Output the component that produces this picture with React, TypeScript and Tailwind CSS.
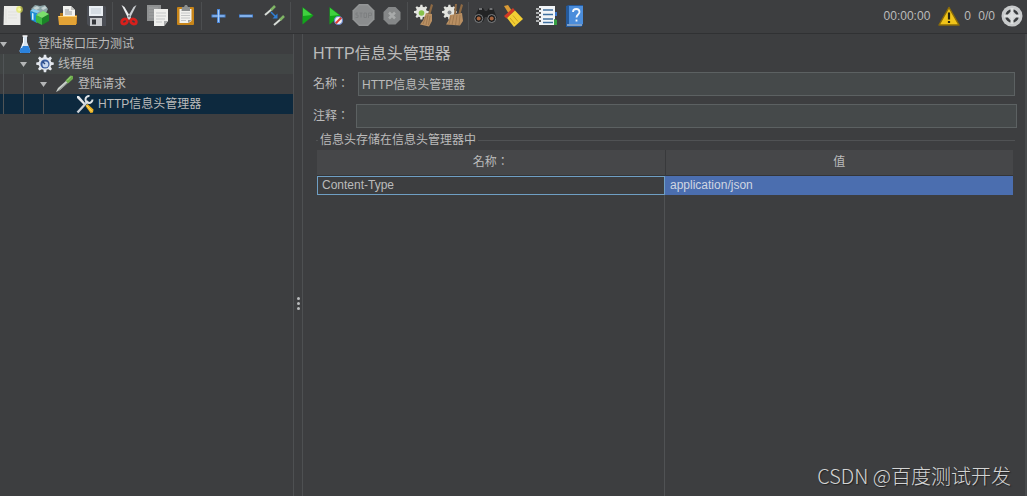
import { ReactNode, useState } from "react";

interface ToolItem {
    label: string;
    icon: ReactNode;
}

interface TreeNode {
    name: string;
    icon: ReactNode;
    leaf?: boolean;
}

const GEAR = "M10.6 1h2.8l.5 3 2 .8 2.5-1.7 2 2-1.7 2.5.8 2 3 .5v2.8l-3 .5-.8 2 1.7 2.5-2 2-2.5-1.7-2 .8-.5 3h-2.8l-.5-3-2-.8-2.5 1.7-2-2 1.7-2.5-.8-2-3-.5v-2.8l3-.5.8-2-1.7-2.5 2-2 2.5 1.7 2-.8z";

function Icon({ children }: { children: ReactNode }) {
    return (
        <svg viewBox="0 0 24 24" className="size-6 shrink-0" aria-hidden="true">
            {children}
        </svg>
    );
}

const toolGroups: ToolItem[][] = [
    [
        {
            label: "新建",
            icon: (
                <Icon>
                    <path d="M4 2h16.5v19H3.5z" fill="#ecece9" />
                    <path d="M6 5v14M8 8h9M8 11h9M8 14h9" stroke="#dededa" strokeWidth=".7" />
                    <circle cx="19.5" cy="5.5" r="3.4" fill="#e3e84e" opacity=".65" />
                    <circle cx="19.5" cy="5.5" r="1.6" fill="#f7f9a0" />
                </Icon>
            ),
        },
        {
            label: "模板",
            icon: (
                <Icon>
                    <path d="M3 5l4-4 5 1 5-1 3 4-3 6-10-1z" fill="#8ba3a6" />
                    <path d="M5 4l4-2 3 2-4 2zM13 4l4-2 2 2-4 2z" fill="#c4d2d2" />
                    <path d="M2 7l7 2v10l-6-3z" fill="#1f8fd6" />
                    <path d="M2 7l3-2 7 2-3 2z" fill="#83cdf2" />
                    <path d="M4 9l1.500 .4v6.5l-1.500-.5z" fill="#d5f0ff" />
                    <path d="M8 11l6 3v7l-6-3z" fill="#3cb640" />
                    <path d="M14 14l7-4v7l-7 4z" fill="#1a8427" />
                    <path d="M8 11l7-4 6 3-7 4z" fill="#7be06c" />
                </Icon>
            ),
        },
        {
            label: "打开",
            icon: (
                <Icon>
                    <path d="M4 9h6l1 2h10v9H4z" fill="#b47719" />
                    <path d="M7 2h8l4 4v9H7z" fill="#f2f2ef" />
                    <path d="M15 2v4h4z" fill="#bfc0bd" />
                    <path d="M9 6h4M9 8h7M9 10h7" stroke="#9a9d9e" />
                    <path d="M2 12h19l-1 9H3z" fill="#e3a336" />
                    <path d="M2.500 12.500h18" stroke="#ffd070" />
                </Icon>
            ),
        },
        {
            label: "保存",
            icon: (
                <Icon>
                    <path d="M3 2h18l1 1v19H5l-2-2z" fill="#4b4e55" />
                    <path d="M5 2h14v10H5z" fill="#e9eef3" />
                    <path d="M7 5h10M7 7h10M7 9h10" stroke="#c3ccd5" />
                    <path d="M6 14h12v8H6z" fill="#c9cbce" />
                    <path d="M8 15.500h4v5H8z" fill="#35373b" />
                </Icon>
            ),
        },
    ],
    [
        {
            label: "剪切",
            icon: (
                <Icon>
                    <path d="M4.500 1l3 2 6.500 11-2 2z" fill="#eceeef" />
                    <path d="M19.500 1l-3 2L10 14l2 2z" fill="#c9cdd0" />
                    <circle cx="12" cy="12" r="1" fill="#6e7275" />
                    <ellipse cx="7.500" cy="17.500" rx="3" ry="2.300" fill="none" stroke="#d8201c" strokeWidth="2.800" transform="rotate(-30 7.500 17.500)" />
                    <ellipse cx="16.500" cy="17.500" rx="3" ry="2.300" fill="none" stroke="#d8201c" strokeWidth="2.800" transform="rotate(30 16.500 17.500)" />
                </Icon>
            ),
        },
        {
            label: "复制",
            icon: (
                <Icon>
                    <path d="M2 1h14v16H2z" fill="#8f9192" />
                    <path d="M4 4h9M4 7h9M4 10h9M4 13h5" stroke="#9fa1a2" />
                    <path d="M9 5h14v12l-4 5H9z" fill="#eeeeec" />
                    <path d="M11 9h10M11 12h10M11 15h9M11 18h6" stroke="#c5c7c8" />
                    <path d="M19 22v-5h4z" fill="#a7a9aa" />
                </Icon>
            ),
        },
        {
            label: "粘贴",
            icon: (
                <Icon>
                    <rect x="4" y="3" width="17" height="18" rx="1" fill="#c88519" />
                    <path d="M6.500 5h12v12l-3 2h-9z" fill="#f1f1ee" />
                    <path d="M8 9h9M8 11.500h9M8 14h9M8 16.500h5" stroke="#c4c6c6" />
                    <path d="M9 3h2l1-2h2l1 2h2v4H8.500z" fill="#8d9090" />
                    <path d="M15 19v-3h3.500z" fill="#9b9d9d" />
                </Icon>
            ),
        },
    ],
    [
        {
            label: "展开",
            icon: (
                <Icon>
                    <path d="M12.500 5v14M5.500 12h14" stroke="#4a86d8" strokeWidth="3" />
                    <path d="M12.500 6v12M6.500 12h12" stroke="#a9cdf5" strokeWidth="1.200" />
                </Icon>
            ),
        },
        {
            label: "收起",
            icon: (
                <Icon>
                    <path d="M5 12h14" stroke="#4a86d8" strokeWidth="3" />
                    <path d="M6 12h12" stroke="#a9cdf5" strokeWidth="1.200" />
                </Icon>
            ),
        },
        {
            label: "切换",
            icon: (
                <Icon>
                    <path d="M3 11l7-6" stroke="#d8ddd8" strokeWidth="2" />
                    <path d="M9 6l4-4" stroke="#7fb565" strokeWidth="2.500" />
                    <path d="M12 21l7-6" stroke="#d8ddd8" strokeWidth="2" />
                    <path d="M18 16l4-4" stroke="#7fb565" strokeWidth="2.500" />
                    <path d="M9 8l5 5" stroke="#2f7fd6" strokeWidth="1.500" />
                    <path d="M15.500 9.500v5h-5z" fill="#2f7fd6" />
                </Icon>
            ),
        },
    ],
    [
        {
            label: "启动",
            icon: (
                <Icon>
                    <path d="M7.500 3l11 8.500-11 9z" fill="#12a51b" />
                    <path d="M8 4l9 7-9 1z" fill="#3fd13f" />
                </Icon>
            ),
        },
        {
            label: "不停顿启动",
            icon: (
                <Icon>
                    <path d="M6.500 3l11 8.500-11 9z" fill="#12a51b" />
                    <path d="M7 4l9 7-9 1z" fill="#3fd13f" />
                    <circle cx="15.500" cy="16.500" r="4" fill="#f1f1f5" stroke="#6684c9" strokeWidth="1.200" />
                    <path d="M12.800 19.200l5.400-5.400" stroke="#dc3d35" strokeWidth="2" />
                </Icon>
            ),
        },
        {
            label: "停止",
            icon: (
                <Icon>
                    <path d="M8 0h9l6.500 6.500v9L17 22H8l-6.500-6.500v-9z" fill="#939596" />
                    <path d="M8.500 1.500h8L22 7v8l-5.500 5.500h-8L3 15V7z" fill="#8b8d8e" />
                    <path d="M7 9H5v2h2v2.500H4.500M8.500 9h3M10 9v4.500M13 9h2.500v4.500H13zM17.500 14V9h3v2.500h-3" fill="none" stroke="#7d7f80" />
                </Icon>
            ),
        },
        {
            label: "关闭",
            icon: (
                <Icon>
                    <path d="M9.500 3h7l5 5v7.500l-5 5h-7l-5-5V8z" fill="#858788" />
                    <path d="M10 8.500l6 6M16 8.500l-6 6" stroke="#a8aaaa" strokeWidth="2.500" />
                </Icon>
            ),
        },
    ],
    [
        {
            label: "清除",
            icon: (
                <Icon>
                    <path d={GEAR} fill="#e4e5e0" transform="translate(1 0) scale(.7)" />
                    <circle cx="9.500" cy="9" r="2.800" fill="#86c14c" />
                    <path d="M19 0l2 1-2.500 9-2-1z" fill="#8f6a43" />
                    <path d="M14 9l6 1v7l-3 5.500-9-2 3-4z" fill="#b98f62" />
                    <path d="M14 12l-3 8M16 11l-2 10M18 12l-1.500 9" stroke="#98734b" strokeWidth=".8" />
                </Icon>
            ),
        },
        {
            label: "清除全部",
            icon: (
                <Icon>
                    <path d={GEAR} fill="#e4e5e0" transform="translate(1 0) scale(.7)" />
                    <circle cx="9.500" cy="8.500" r="2" fill="#84878a" />
                    <path d="M15 0l2 0-1 10h-2zM21 0l2 1-2.500 9-2-1z" fill="#8f6a43" />
                    <path d="M10 11l12-2 1 8-3 4.500-14-1 3-5z" fill="#b98f62" />
                    <path d="M11 12l-2 8M14 11l-2 10M17 11l-1.500 10M20 11l-1 10" stroke="#98734b" strokeWidth=".8" />
                </Icon>
            ),
        },
    ],
    [
        {
            label: "查找",
            icon: (
                <Icon>
                    <path d="M6 4h4l2 3h2l2-3h4l4 10-3 4h-5l-2-5h-2l-2 5H4l-3-4z" fill="#222324" />
                    <path d="M6 5h3M16.500 5h3" stroke="#8b8d8e" strokeWidth="1.500" />
                    <circle cx="5.700" cy="14.500" r="4" fill="#1b1b1c" stroke="#808284" />
                    <circle cx="18.700" cy="14.500" r="4" fill="#1b1b1c" stroke="#808284" />
                    <circle cx="5.700" cy="14.500" r="2" fill="#a8653e" />
                    <circle cx="18.700" cy="14.500" r="2" fill="#a8653e" />
                </Icon>
            ),
        },
        {
            label: "重置查找",
            icon: (
                <Icon>
                    <path d="M3 2l4-1 4 6-3 3z" fill="#d99a35" />
                    <path d="M3 12l9-8 2 2.500-8.500 8z" fill="#d23a25" />
                    <path d="M6 14l8-7.500 8 8.500-9 8z" fill="#f3cf33" />
                    <path d="M9 14l5 6M12 11.500l5 6" stroke="#c89c1c" strokeWidth=".9" />
                </Icon>
            ),
        },
    ],
    [
        {
            label: "函数助手",
            icon: (
                <Icon>
                    <path d="M5 2h16v19H5z" fill="#f1f4f7" />
                    <path d="M9 6h10M9 10.500h10M9 15h10M9 18.500h10" stroke="#3f6f9f" strokeWidth="1.500" />
                    <path d="M2 5h5M2 9h5M2 13h5M2 17h5" stroke="#d5d7d8" strokeWidth="1.500" />
                    <path d="M6 4v2M6 8v2M6 12v2M6 16v2" stroke="#333" strokeWidth="1.500" />
                    <path d="M21 8h2v4h-2z" fill="#3b78cf" />
                    <path d="M20 15l3 1v5h-3z" fill="#37a044" />
                </Icon>
            ),
        },
        {
            label: "帮助",
            icon: (
                <Icon>
                    <path d="M4 2l3-1h14v20l-2 2H4z" fill="#24599b" />
                    <path d="M7 2h14v18H7z" fill="#4b8ddb" />
                    <path d="M5 21h15" stroke="#dce7f2" />
                    <path d="M11 8c0-4 6.500-4 6.500 0 0 2.500-3 2.500-3 5.500M14.500 15.500v2" fill="none" stroke="#f2f7fd" strokeWidth="1.800" />
                </Icon>
            ),
        },
    ],
];

const treeNodes: TreeNode[] = [
    {
        name: "登陆接口压力测试",
        icon: (
            <svg viewBox="0 0 20 20" className="size-5" aria-hidden="true">
                <path d="M8 2h4v6l3.500 9-1 2h-9l-1-2L8 8z" fill="#d7e3ee" />
                <path d="M6.500 12h7l2 5-1 2h-9l-1-2z" fill="#2b82dc" />
                <path d="M8.500 4v5l-2 5" stroke="#fff" fill="none" />
                <path d="M7.500 2h5" stroke="#f2f2f2" strokeWidth="1.500" />
            </svg>
        ),
    },
    {
        name: "线程组",
        icon: (
            <svg viewBox="0 0 24 24" className="size-5" aria-hidden="true">
                <path d={GEAR} fill="#e3e7ee" />
                <circle cx="12" cy="12" r="5.500" fill="#3a5da0" />
                <circle cx="12.500" cy="12.500" r="3.500" fill="#c7d6ee" />
                <path d="M12 12l-3-3" stroke="#26467f" strokeWidth="1.600" />
            </svg>
        ),
    },
    {
        name: "登陆请求",
        icon: (
            <svg viewBox="0 0 20 20" className="size-5" aria-hidden="true">
                <path d="M1 18l2-4 9-8 2 2-9 8z" fill="#c9cfca" />
                <path d="M3 17l9-8" stroke="#858d89" />
                <path d="M10.500 6.500l5-5 2.500.5v3l-5 4.500z" fill="#6cab4c" />
                <path d="M12 6.500l4-4" stroke="#a6da85" />
            </svg>
        ),
    },
    {
        name: "HTTP信息头管理器",
        leaf: true,
        icon: (
            <svg viewBox="0 0 20 20" className="size-5" aria-hidden="true">
                <path d="M2 2l2 0 7 8-1.500 1.500L2 4z" fill="#e6e8ea" />
                <path d="M10.500 12l2-2 6 5.500-.5 3-2.500.5z" fill="#eeb220" />
                <path d="M11.500 11.500l5.500 6" stroke="#ffdd75" />
                <path d="M2.500 18.500L13 7" stroke="#cdd2d7" strokeWidth="2.300" />
                <path d="M17.500 5.500A3.500 3.500 0 1 1 14.500 2" fill="none" stroke="#dfe3e6" strokeWidth="2" />
            </svg>
        ),
    },
];

function Toolbar() {
    return (
        <header className="flex h-[34px] shrink-0 items-center justify-between border-b border-[#303133] pb-px">
            <div className="flex items-center gap-1">
                {toolGroups.map((group, i) => (
                    <div key={i} className="flex items-center gap-1">
                        {i > 0 && <span className={i === 6 ? "h-7 w-px" : "h-7 w-px bg-[#4c4e50]"} />}
                        {group.map((tool) => (
                            <button key={tool.label} type="button" aria-label={tool.label} className="size-6">
                                {tool.icon}
                            </button>
                        ))}
                    </div>
                ))}
            </div>
            <div className="flex items-center pr-1">
                <span>00:00:00</span>
                <button type="button" aria-label="警告" className="mx-1 pl-1">
                    <svg viewBox="0 0 22 20" className="h-5 w-[22px]" aria-hidden="true">
                        <path d="M11 1.500L21 19H1z" fill="#f0c419" stroke="#8b6c08" strokeWidth="1.500" strokeLinejoin="round" />
                        <path d="M11 6.500v7M11 15v2" stroke="#29260f" strokeWidth="2.200" />
                    </svg>
                </button>
                <span className="w-[14px]">0</span>
                <span>0/0</span>
                <svg viewBox="0 0 22 22" className="ml-[6px] size-[22px]" aria-hidden="true">
                    <circle cx="11" cy="11" r="10.500" fill="#c8cacb" />
                    <circle cx="11" cy="11" r="5.500" fill="none" stroke="#3a3c3e" strokeWidth="2.600" />
                    <path d="M11 3v16M3 11h16" stroke="#dddfdf" strokeWidth="3" />
                </svg>
            </div>
        </header>
    );
}

function TestTree() {
    const [selected, setSelected] = useState(3);

    return (
        <nav className="w-[294px] shrink-0 border-r border-[#4e5052]">
            <ul>
                {treeNodes.map((node, level) => (
                    <li key={node.name}>
                        <button
                            type="button"
                            onClick={() => setSelected(level)}
                            className={`flex h-5 w-full items-center text-left ${
                                selected === level ? "bg-[#0d293e]" : level === 1 ? "bg-[#414545]" : ""
                            }`}
                        >
                            {treeNodes.slice(0, level).map((parent) => (
                                <span key={parent.name} className="h-full w-5 pl-[3px]">
                                    <span className="block h-full w-px bg-[#505456]" />
                                </span>
                            ))}
                            <span className="w-[15px]">
                                {!node.leaf && (
                                    <svg viewBox="0 0 7 5" className="h-[5px] w-[7px]" aria-hidden="true">
                                        <path d="M0 0h7L3.500 5z" fill="#b4b6b7" />
                                    </svg>
                                )}
                            </span>
                            {node.icon}
                            <span className="pl-[3px]">{node.name}</span>
                        </button>
                    </li>
                ))}
            </ul>
        </nav>
    );
}

function HeaderManager() {
    const [name, setName] = useState("HTTP信息头管理器");
    const [comment, setComment] = useState("");

    return (
        <main className="flex min-w-0 flex-1 flex-col pt-2 pr-2 pl-[10px]">
            <h1 className="mb-[6px] text-base leading-6">HTTP信息头管理器</h1>
            <div className="mb-2 flex items-center pr-[2px]">
                <label htmlFor="name" className="w-[45px] shrink-0 font-['Liberation_Sans','Noto_Sans_CJK_TC',sans-serif]">名称：</label>
                <input
                    id="name"
                    value={name}
                    onChange={(e) => setName(e.target.value)}
                    className="h-6 min-w-0 flex-1 border border-[#5c6162] bg-[#45494a] px-[3px] pb-[2px] outline-none"
                />
            </div>
            <div className="mb-1 flex items-center">
                <label htmlFor="comment" className="w-[43px] shrink-0 font-['Liberation_Sans','Noto_Sans_CJK_TC',sans-serif]">注释：</label>
                <input
                    id="comment"
                    value={comment}
                    onChange={(e) => setComment(e.target.value)}
                    className="h-6 min-w-0 flex-1 border border-[#5c6162] bg-[#45494a] px-[3px] pb-[2px] outline-none"
                />
            </div>
            <fieldset className="mr-[2px] ml-[3px] flex min-w-0 flex-1 flex-col border-t border-[#505254] pr-[2px] pl-px">
                <legend className="ml-px px-[2px] leading-4">信息头存储在信息头管理器中</legend>
                <table className="mt-[2px] w-full table-fixed border-collapse">
                    <thead>
                        <tr className="h-[25px] border-b border-[#343537] bg-[#464749]">
                            <th className="border-r border-[#38393b] p-0 font-['Liberation_Sans','Noto_Sans_CJK_TC',sans-serif] font-normal">名称：</th>
                            <th className="p-0 font-normal">值</th>
                        </tr>
                    </thead>
                    <tbody>
                        <tr>
                            <td className="p-0">
                                <div className="h-[19px] border border-[#6f9fc4] px-1 leading-[17px]">Content-Type</div>
                            </td>
                            <td className="bg-[#4b6eaf] px-[5px] py-0 text-[#d0d6e2]">application/json</td>
                        </tr>
                    </tbody>
                </table>
                <div className="w-1/2 flex-1 border-r border-[#505254]" />
            </fieldset>
        </main>
    );
}

export default function App() {
    return (
        <div className="relative flex h-screen flex-col overflow-hidden bg-[#3d3e40] font-['Liberation_Sans','Noto_Sans_CJK_SC',sans-serif] text-xs text-[#bbbbbb]">
            <Toolbar />
            <div className="flex min-h-0 flex-1">
                <TestTree />
                <div className="flex w-[9px] shrink-0 cursor-col-resize flex-col items-center justify-center gap-[2px] border-r border-[#4e5052] pt-19">
                    <span className="size-[3px] rounded-full bg-[#b9bbbc]" />
                    <span className="size-[3px] rounded-full bg-[#b9bbbc]" />
                    <span className="size-[3px] rounded-full bg-[#b9bbbc]" />
                </div>
                <HeaderManager />
                <div className="w-[2px] shrink-0 bg-[#484a4c]" />
            </div>
            <div className="absolute right-4 bottom-[6px] font-['Noto_Sans_CJK_SC',sans-serif] text-xl leading-7 font-light text-[#d3d4d4] [text-shadow:1px_1px_1px_#222]">
                CSDN @百度测试开发
            </div>
        </div>
    );
}
